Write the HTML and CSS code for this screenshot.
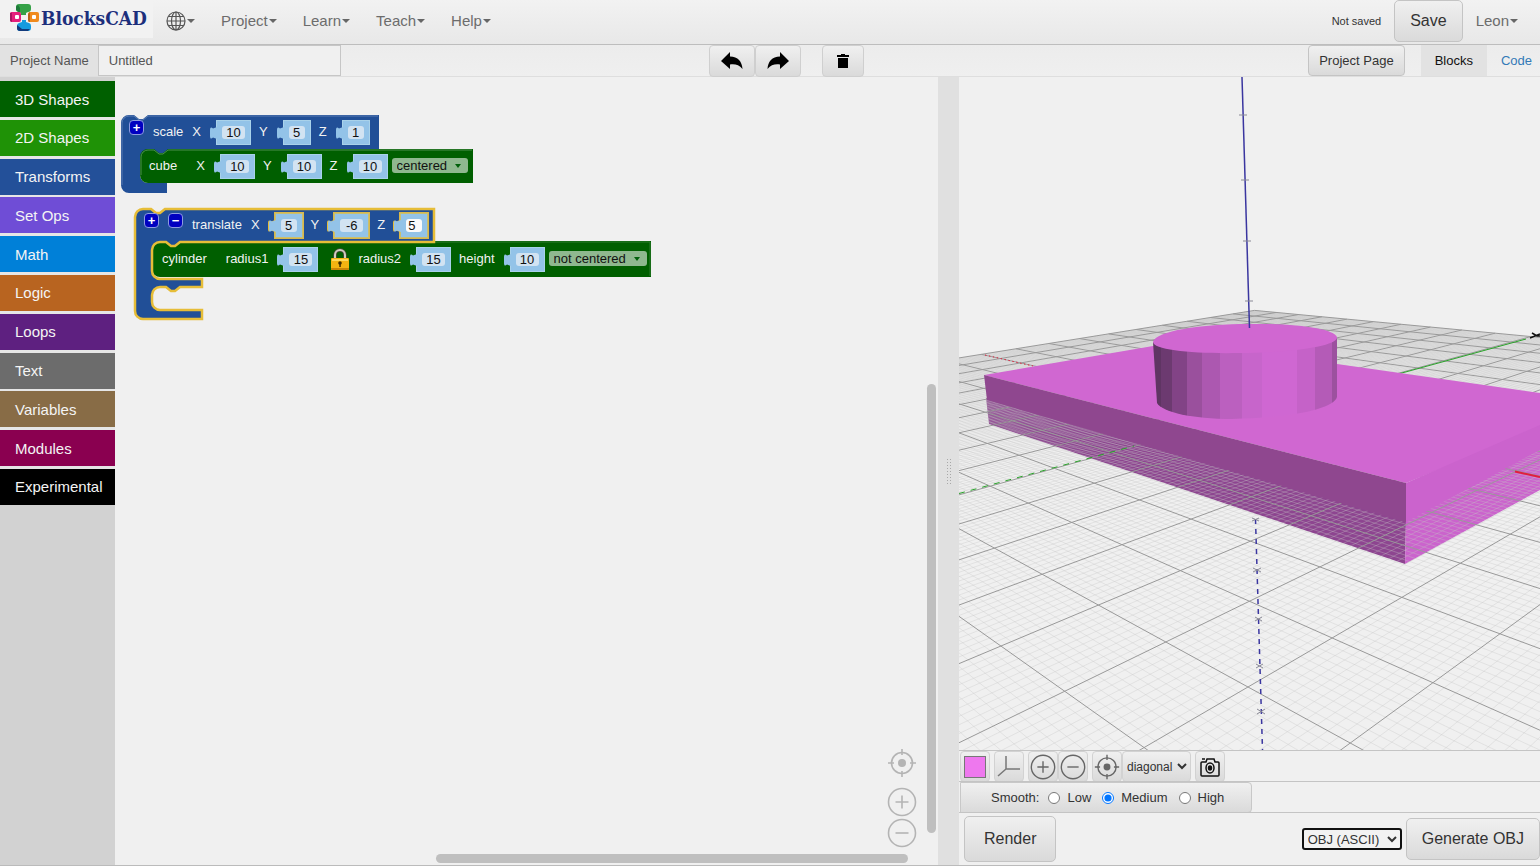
FILE: index.html
```html
<!DOCTYPE html>
<html lang="en">
<head>
  <meta charset="UTF-8" />
  <title>BlocksCAD</title>
  <link rel="stylesheet" href="styles.css">
</head>
<body>

<!-- shared icons -->
<svg class="sprite" aria-hidden="true">
  <symbol id="icon-target" viewBox="0 0 30 30">
    <g fill="none" stroke="currentColor" stroke-width="1.6">
      <circle cx="15" cy="15" r="10.5"/>
      <path d="M15 1v6M15 23v6M1 15h6M23 15h6"/>
    </g>
    <circle cx="15" cy="15" r="4" fill="currentColor"/>
  </symbol>
  <symbol id="icon-plus" viewBox="0 0 30 30">
    <g fill="none" stroke="currentColor" stroke-width="1.6">
      <circle cx="15" cy="15" r="13.5"/>
      <path d="M15 8.500v13M8.500 15h13"/>
    </g>
  </symbol>
  <symbol id="icon-minus" viewBox="0 0 30 30">
    <g fill="none" stroke="currentColor" stroke-width="1.6">
      <circle cx="15" cy="15" r="13.500"/>
      <path d="M8.500 15h13"/>
    </g>
  </symbol>
  <symbol id="icon-tab" viewBox="0 0 8 14">
    <path d="M8 1L4 2.500C2 .5 1 1.500 1 4v6c0 2.500 1 3.500 3 1.500l4 1.500z" fill="#93c3e8"/>
  </symbol>
</svg>

<header class="navbar">
  <a class="logo" href="#">
    <svg width="30" height="28" viewBox="0 0 30 28">
      <path d="M9 0h9a3 3 0 0 1 3 3v2a3 3 0 0 1-3 3l-2 1v2h-5V9L8 8a3 3 0 0 1-2-3V3a3 3 0 0 1 3-3z" fill="#35a147"/>
      <path d="M8 1a3 3 0 0 0-2 2v3l4 3V4z" fill="#1e7a3a"/>
      <path d="M1 8h8a2 2 0 0 1 2 2v6a2 2 0 0 1-2 2H2a2 2 0 0 1-2-2V9z" fill="#e5207c"/>
      <path d="M0 9h2v9a2 2 0 0 1-2-2z" fill="#a81560"/>
      <rect x="5" y="11" width="4" height="4" rx="1" fill="#fff"/>
      <path d="M20 8h7a2 2 0 0 1 2 2v6a2 2 0 0 1-2 2h-7a2 2 0 0 1-2-2v-6a2 2 0 0 1 2-2z" fill="#f08a1d"/>
      <path d="M18 10l2-2v10a2 2 0 0 1-2-2z" fill="#b8621a"/>
      <rect x="22" y="11" width="4" height="4" rx="1" fill="#fff"/>
      <path d="M12 16h4v2l3 1a3 3 0 0 1 2 3v2a3 3 0 0 1-3 3H9a3 3 0 0 1-2-3v-2a3 3 0 0 1 2-3l3-1z" fill="#159be0"/>
      <path d="M7 21v3a3 3 0 0 0 3 3h8l2-2h-8z" fill="#123a7c"/>
    </svg>
    <span>BlocksCAD</span>
  </a>
  <nav class="menu">
    <button type="button" class="menu-item" aria-label="Language">
      <svg class="globe" width="20" height="20" viewBox="0 0 20 20" fill="none" stroke="#555" stroke-width="1.200">
        <circle cx="10" cy="10" r="9"/>
        <ellipse cx="10" cy="10" rx="4.500" ry="9"/>
        <path d="M10 1v18M1 10h18M2.500 5.500h15M2.500 14.500h15"/>
      </svg><i class="caret"></i>
    </button>
    <button type="button" class="menu-item">Project<i class="caret"></i></button>
    <button type="button" class="menu-item">Learn<i class="caret"></i></button>
    <button type="button" class="menu-item">Teach<i class="caret"></i></button>
    <button type="button" class="menu-item">Help<i class="caret"></i></button>
  </nav>
  <div class="account">
    <span class="save-state">Not saved</span>
    <button type="button" class="btn btn-lg">Save</button>
    <button type="button" class="menu-item">Leon<i class="caret"></i></button>
  </div>
</header>

<div class="toolbar">
  <div class="toolbar-left">
    <label for="projectName">Project Name</label>
    <input type="text" id="projectName" value="Untitled">
  </div>
  <div class="history">
    <button type="button" class="btn" aria-label="Undo">
      <svg width="24" height="18" viewBox="0 0 24 18"><path d="M1 9L10 0v4.500c8 0 12 5 12.500 12.500C19 12.500 15 12 10 12.500V17z"/></svg>
    </button>
    <button type="button" class="btn" aria-label="Redo">
      <svg width="24" height="18" viewBox="0 0 24 18"><path d="M23 9L14 0v4.500C6 4.500 2 9.500 1.500 17 5 12.500 9 12 14 12.500V17z"/></svg>
    </button>
    <button type="button" class="btn trash" aria-label="Delete">
      <svg width="12" height="14" viewBox="0 0 12 14"><path d="M4 0h4v1h4v2H0V1h4zM1 4h10v10H1z"/></svg>
    </button>
  </div>
  <div class="toolbar-right">
    <button type="button" class="btn">Project Page</button>
    <div class="tabs">
      <a class="tab active" href="#blocks">Blocks</a>
      <a class="tab" href="#code">Code</a>
    </div>
  </div>
</div>

<main class="editor">
  <nav class="toolbox">
    <div class="categories">
      <button type="button" class="category shapes3d">3D Shapes</button>
      <button type="button" class="category shapes2d">2D Shapes</button>
      <button type="button" class="category transforms">Transforms</button>
      <button type="button" class="category setops">Set Ops</button>
      <button type="button" class="category math">Math</button>
      <button type="button" class="category logic">Logic</button>
      <button type="button" class="category loops">Loops</button>
      <button type="button" class="category text">Text</button>
      <button type="button" class="category variables">Variables</button>
      <button type="button" class="category modules">Modules</button>
      <button type="button" class="category experimental">Experimental</button>
    </div>
  </nav>

  <section class="workspace">
    <div class="block block-scale">
      <svg class="block-shape" width="356" height="80">
        <path d="M0 8a8 8 0 0 1 8-8h5l5 4h4l5-4H258V42H19V60a8 8 0 0 0 8 8H46V78H8a8 8 0 0 1-8-8z" fill="#214f97"/>
        <path d="M1 70V8a7 7 0 0 1 7-7h5l5 4h4l5-4H257" fill="none" stroke="#5a7db3"/>
        <path d="M19 42a8 8 0 0 1 8-8h6l5 4h4l5-4H352V68H27a8 8 0 0 1-8-8z" fill="#005f00"/>
        <path d="M20 60V42a7 7 0 0 1 7-7h6l5 4h4l5-4H351" fill="none" stroke="#4d8f4d"/>
      </svg>
      <div class="block-row">
        <button type="button" class="mutator" aria-label="Add">+</button>
        <span class="block-name">scale</span>
        <label for="scaleX">X</label>
        <span class="value"><svg class="notch"><use href="#icon-tab"/></svg><input id="scaleX" value="10"></span>
        <label for="scaleY">Y</label>
        <span class="value short"><svg class="notch"><use href="#icon-tab"/></svg><input id="scaleY" value="5"></span>
        <label for="scaleZ">Z</label>
        <span class="value short"><svg class="notch"><use href="#icon-tab"/></svg><input id="scaleZ" value="1"></span>
      </div>
      <div class="block-row child">
        <span class="block-name wide">cube</span>
        <label for="cubeX">X</label>
        <span class="value"><svg class="notch"><use href="#icon-tab"/></svg><input id="cubeX" value="10"></span>
        <label for="cubeY">Y</label>
        <span class="value"><svg class="notch"><use href="#icon-tab"/></svg><input id="cubeY" value="10"></span>
        <label for="cubeZ">Z</label>
        <span class="value"><svg class="notch"><use href="#icon-tab"/></svg><input id="cubeZ" value="10"></span>
        <span class="dropdown"><select aria-label="Cube centering"><option>centered</option></select></span>
      </div>
    </div>

    <div class="block block-translate selected">
      <svg class="block-shape" width="520" height="112">
        <path d="M18 41a8 8 0 0 1 8-8H517V69H26a8 8 0 0 1-8-8z" fill="#005f00"/>
        <path d="M68 34H516V68" fill="none" stroke="#2f7a2f"/>
        <path d="M1 8a8 8 0 0 1 8-8h8l5 4h4l5-4H300V33H46l-5 4h-4l-5-4H26a8 8 0 0 0-8 8V62a8 8 0 0 0 8 8H68V78H46l-5 4h-4l-5-4H26a8 8 0 0 0-8 8v7a8 8 0 0 0 8 8H68v9H9a8 8 0 0 1-8-8z" transform="translate(0 1)" fill="#214f97" stroke="#e6bd38" stroke-width="2.500"/>
      </svg>
      <div class="block-row">
        <button type="button" class="mutator" aria-label="Add">+</button>
        <button type="button" class="mutator" aria-label="Remove">−</button>
        <span class="block-name">translate</span>
        <label for="moveX">X</label>
        <span class="value short"><svg class="notch"><use href="#icon-tab"/></svg><input id="moveX" value="5"></span>
        <label for="moveY">Y</label>
        <span class="value"><svg class="notch"><use href="#icon-tab"/></svg><input id="moveY" value="-6"></span>
        <label for="moveZ">Z</label>
        <span class="value short editing"><svg class="notch"><use href="#icon-tab"/></svg><input id="moveZ" value="5"></span>
      </div>
      <div class="block-row child">
        <span class="block-name wide">cylinder</span>
        <label for="radius1">radius1</label>
        <span class="value"><svg class="notch"><use href="#icon-tab"/></svg><input id="radius1" value="15"></span>
        <button type="button" class="lock" aria-label="Lock radii">
          <svg width="18" height="22" viewBox="0 0 18 22">
            <path d="M4 11V7a5 5 0 0 1 10 0v4" fill="none" stroke="#4c4a3e" stroke-width="3.500"/>
            <path d="M4 11V7a5 5 0 0 1 10 0v4" fill="none" stroke="#cfcdc0" stroke-width="2"/>
            <rect x="0" y="10" width="18" height="12" rx="1" fill="#f3b411"/>
            <path d="M1 11h16v2H1z" fill="#ffd95a"/>
            <path d="M0 20h18v1a1 1 0 0 1-1 1H1a1 1 0 0 1-1-1z" fill="#c98606"/>
            <circle cx="9" cy="15" r="1.800" fill="#3a2a00"/>
            <path d="M8.300 15h1.500v4H8.300z" fill="#3a2a00"/>
          </svg>
        </button>
        <label for="radius2">radius2</label>
        <span class="value"><svg class="notch"><use href="#icon-tab"/></svg><input id="radius2" value="15"></span>
        <label for="height">height</label>
        <span class="value"><svg class="notch"><use href="#icon-tab"/></svg><input id="height" value="10"></span>
        <span class="dropdown"><select aria-label="Cylinder centering"><option>not centered</option></select></span>
      </div>
    </div>

    <div class="workspace-zoom">
      <button type="button" aria-label="Center"><svg width="30" height="30"><use href="#icon-target"/></svg></button>
      <button type="button" aria-label="Zoom in"><svg width="30" height="30"><use href="#icon-plus"/></svg></button>
      <button type="button" aria-label="Zoom out"><svg width="30" height="30"><use href="#icon-minus"/></svg></button>
    </div>
    <div class="scrollbar vertical"></div>
    <div class="scrollbar horizontal"></div>
  </section>

  <div class="splitter"><span class="grip"></span></div>

  <section class="viewer">
    <svg class="scene" viewBox="959 77 581 673" preserveAspectRatio="xMidYMid slice">
      <defs>
        <linearGradient id="facets" gradientUnits="userSpaceOnUse" x1="1154" y1="0" x2="1337" y2="0">
          <stop offset="0" stop-color="#5f3563"/><stop offset=".04" stop-color="#5f3563"/>
          <stop offset=".04" stop-color="#6c3a70"/><stop offset=".1" stop-color="#6c3a70"/>
          <stop offset=".1" stop-color="#824386"/><stop offset=".18" stop-color="#824386"/>
          <stop offset=".18" stop-color="#9a509d"/><stop offset=".26" stop-color="#9a509d"/>
          <stop offset=".26" stop-color="#ac58b0"/><stop offset=".36" stop-color="#ac58b0"/>
          <stop offset=".36" stop-color="#bb60bf"/><stop offset=".48" stop-color="#bb60bf"/>
          <stop offset=".48" stop-color="#c765cb"/><stop offset=".59" stop-color="#c765cb"/>
          <stop offset=".59" stop-color="#cf67d2"/><stop offset=".78" stop-color="#cf67d2"/>
          <stop offset=".78" stop-color="#c562c8"/><stop offset=".88" stop-color="#c562c8"/>
          <stop offset=".88" stop-color="#b45bb7"/><stop offset=".97" stop-color="#b45bb7"/>
          <stop offset=".97" stop-color="#9c519f"/><stop offset="1" stop-color="#9c519f"/>
        </linearGradient>
      </defs>

      <!-- part of the slab under the ground plane -->
      <path d="M986 398L989 424L1405 564L1406 520z" fill="#8d4590"/>
      <path d="M1406 520L1405 564L1540 490V440z" fill="#cb63cd"/>

      <path id="minorGrid" class="grid-minor"/>
      <path id="majorGrid" class="grid-major"/>

      <path d="M959 493.500L1134 446" class="axis-y" stroke-dasharray="6 6"/>
      <path d="M985 355L1033 366" class="axis-x" stroke-dasharray="1.500 2.500"/>
      <path d="M1400 373.500L1526 339" class="axis-y"/>

      <!-- part of the slab above the ground plane -->
      <path d="M984 375L1153 346L1337 364L1540 393V428L1406 483z" fill="#d067d1"/>
      <path d="M984 375L1406 483V522L987 400z" fill="#8f478f"/>
      <path d="M1406 483L1540 425V450L1406 522z" fill="#cb63cd"/>
      <path d="M1515 471.500L1540 477" class="axis-x" stroke-width="2"/>

      <!-- cylinder -->
      <path d="M1153 342L1157 403C1162 412 1192 419 1232 419C1290 418 1334 409 1337 397V338z" fill="url(#facets)"/>
      <path d="M1153 342C1156 331 1200 324 1250 324C1298 323 1334 329 1337 337C1339 346 1290 353 1240 353C1195 354 1153 350 1153 342z" fill="#d067d1"/>

      <path d="M1242 77L1249.500 328" class="axis-z"/>
      <path d="M1255.500 519L1262.500 750" class="axis-z" stroke-dasharray="5 5"/>
      <path d="M1239 115h8M1241 180h8M1243 241h8M1245 301h8" class="tick"/>
      <path d="M1252 518l7 3m0-3l-7 3M1253 568l8 4m0-4l-8 4M1255 617l7 4m0-4l-7 4M1256 664l7 4m0-4l-7 4M1257 709l8 5m0-5l-8 5" class="tick"/>
      <path d="M1530 338l10-4M1532 333l5 3h4" fill="none" stroke="#111" stroke-width="1.500"/>
    </svg>

    <div class="view-tools">
      <button type="button" class="btn tool" aria-label="Color"><span class="swatch"></span></button>
      <button type="button" class="btn tool" aria-label="Axes">
        <svg width="24" height="24" viewBox="0 0 24 24" fill="none" stroke="#777" stroke-width="1.500"><path d="M9 1v13h14M9 14l-8 7"/></svg>
      </button>
      <div class="tool-group">
        <button type="button" class="btn tool" aria-label="Zoom in"><svg width="26" height="26"><use href="#icon-plus"/></svg></button>
        <button type="button" class="btn tool" aria-label="Zoom out"><svg width="26" height="26"><use href="#icon-minus"/></svg></button>
      </div>
      <div class="tool-group">
        <button type="button" class="btn tool" aria-label="Reset view"><svg width="26" height="26"><use href="#icon-target"/></svg></button>
        <select class="btn view-select" aria-label="View"><option>diagonal</option></select>
      </div>
      <button type="button" class="btn tool" aria-label="Take picture">
        <svg width="22" height="22" viewBox="0 0 22 22" fill="none" stroke="#111" stroke-width="1.500">
          <path d="M3 6h4l1-3h7l1 3h3a1 1 0 0 1 1 1v12a1 1 0 0 1-1 1H3a1 1 0 0 1-1-1V7a1 1 0 0 1 1-1zM3 3h3"/>
          <ellipse cx="11" cy="12" rx="4" ry="5"/>
          <ellipse cx="11" cy="12" rx="1.500" ry="2" fill="#111"/>
        </svg>
      </button>
    </div>

    <div class="smooth-row">
      <fieldset class="smooth">
        <legend>Smooth:</legend>
        <label><input type="radio" name="smooth">Low</label>
        <label><input type="radio" name="smooth" checked>Medium</label>
        <label><input type="radio" name="smooth">High</label>
      </fieldset>
    </div>

    <div class="render-row">
      <button type="button" class="btn btn-lg render">Render</button>
      <div class="export">
        <select class="format" aria-label="Export format"><option>OBJ (ASCII)</option></select>
        <button type="button" class="btn btn-lg">Generate OBJ</button>
      </div>
    </div>
  </section>
</main>

<script>
  // perspective of the ground plane, one unit = one major grid cell
  function project(i, j) {
    const w = 1 - 0.1095 * i + 0.1045 * j;
    const x = (1247.9 - 45.5 * i + 223.4 * j) / w;
    const y = (687 - 25.3 * i + 17.6 * j) / w;
    return x.toFixed(1) + ' ' + y.toFixed(1);
  }

  const minI = -16, maxI = 4, minJ = -4, maxJ = 16;
  let major = '';
  let minor = '';

  for (let n = 0; n <= 200; n++) {
    const i = minI + n / 10;
    const j = minJ + n / 10;
    const lines = `M${project(i, minJ)}L${project(i, maxJ)}M${project(minI, j)}L${project(maxI, j)}`;
    if (n % 10 === 0) {
      major += lines;
    } else {
      minor += lines;
    }
  }

  document.getElementById('majorGrid').setAttribute('d', major);
  document.getElementById('minorGrid').setAttribute('d', minor);
</script>
</body>
</html>
```

FILE: styles.css
```css
* {
    box-sizing: border-box;
}

body {
    margin: 0;
    height: 100vh;
    display: flex;
    flex-direction: column;
    overflow: hidden;
    background-color: #f0f0f0;
    color: #333;
    font-family: "Liberation Sans", Arial, Helvetica, sans-serif;
    font-size: 13px;
}

button, input, select {
    font-family: inherit;
    font-size: inherit;
    color: inherit;
    margin: 0;
}

a {
    text-decoration: none;
}

.sprite {
    position: absolute;
    width: 0;
    height: 0;
}

.btn {
    display: flex;
    align-items: center;
    justify-content: center;
    padding: 0 10px;
    border: 1px solid #c4c4c4;
    border-radius: 4px;
    background: linear-gradient(#f0f0f0, #dadada);
}

.btn-lg {
    font-size: 16px;
    padding: 0 15px;
    border-radius: 5px;
}

.caret {
    margin-left: 1px;
    border-top: 4px solid #666;
    border-left: 4px solid transparent;
    border-right: 4px solid transparent;
}

/* top bar */
.navbar {
    display: flex;
    height: 45px;
    flex-shrink: 0;
    border-bottom: 1px solid #bdbdbd;
    background: linear-gradient(#f2f2f2, #e8e8e8);
}

.logo {
    display: flex;
    width: 153px;
    height: 38px;
    padding: 4px 0 0 10px;
    background-color: #f2f2f2;
    color: #1d2f7c;
    font: bold 19px/28px "DejaVu Serif Condensed", "DejaVu Serif", serif;
}

.logo svg {
    flex-shrink: 0;
    margin-right: 1px;
}

.menu {
    display: flex;
}

.menu-item {
    display: flex;
    align-items: center;
    align-self: flex-start;
    height: 41px;
    padding: 0 13px;
    border: 0;
    background: none;
    color: #6c6c6c;
    font-size: 15px;
}

.account {
    display: flex;
    align-items: center;
    height: 42px;
    margin-left: auto;
    padding-right: 9px;
}

.account .btn {
    height: 42px;
}

.save-state {
    margin-right: 13px;
    font-size: 11px;
}

/* project bar */
.toolbar {
    display: flex;
    height: 32px;
    flex-shrink: 0;
    border-bottom: 1px solid #dedede;
    background: linear-gradient(#ececec, #efefef);
}

.toolbar-left {
    display: flex;
    flex: 709 1 0;
}

.toolbar-left label {
    padding: 0 9px 0 10px;
    background-color: #e2e2e2;
    color: #555;
    line-height: 31px;
}

.toolbar-left input {
    width: 243px;
    padding: 0 10px;
    border: 1px solid #c6c6c6;
    background-color: #f0f0f0;
    color: #555;
}

.toolbar-right {
    display: flex;
    flex: 676 1 0;
    justify-content: flex-end;
}

.history {
    display: flex;
    height: 32px;
}

.history .btn {
    width: 46px;
    border-color: #cfcfcf;
}

.history .trash {
    width: 42px;
    margin-left: 21px;
}

.tabs {
    display: flex;
    margin-left: 16px;
    line-height: 31px;
}

.tab {
    padding: 0 14px;
    color: #337ab7;
}

.tab.active {
    background-color: #e2e2e2;
    color: #111;
}

.tab:last-child {
    padding-right: 8px;
}

/* editor */
.editor {
    flex: 1;
    min-height: 0;
    display: grid;
    grid-template-columns: 115px minmax(0, 823fr) 21px minmax(0, 581fr);
    grid-template-rows: minmax(0, 1fr);
    border-bottom: 1px solid #bbb;
}

.toolbox {
    padding-top: 4px;
    background-color: #d2d2d2;
}

.categories {
    display: flex;
    flex-direction: column;
    justify-content: space-between;
    height: 424px;
    background-color: #e6e6e6;
}

.category {
    height: 36px;
    padding: 0 15px;
    border: 0;
    color: #f4f4f4;
    font-size: 15px;
    text-align: left;
}

.shapes3d { background-color: #006000; }
.shapes2d { background-color: #1f9206; }
.transforms { background-color: #235099; }
.setops { background-color: #6f4dd6; }
.math { background-color: #0080d8; }
.logic { background-color: #b86420; }
.loops { background-color: #5e2080; }
.text { background-color: #6c6c6c; }
.variables { background-color: #886c46; }
.modules { background-color: #8a0050; }
.experimental { background-color: #000; }

.workspace {
    position: relative;
    overflow: hidden;
}

/* blocks on the canvas */
.block {
    position: absolute;
}

.block-scale {
    left: 6px;
    top: 38px;
}

.block-translate {
    left: 19px;
    top: 131px;
}

.block-shape {
    position: absolute;
    left: 0;
    top: 0;
    overflow: visible;
}

.block-row {
    position: relative;
    display: flex;
    align-items: center;
    height: 34px;
    padding-left: 8px;
    color: #f2f2f2;
    white-space: nowrap;
}

.selected .block-row {
    padding-left: 10px;
}

.block-row.child {
    padding-left: 28px;
}

.block-row label {
    margin: 0 9px 0 8px;
    padding-bottom: 2px;
}

.block-name {
    margin-right: 1px;
    padding-bottom: 2px;
}

.block-name.wide {
    margin-right: 11px;
}

.mutator {
    width: 15px;
    height: 15px;
    margin: 5px 9px 0 0;
    align-self: flex-start;
    padding: 0;
    border: 1px solid #8d9be0;
    border-radius: 4px;
    background-color: #0000c0;
    color: #fff;
    font-size: 13px;
    font-weight: bold;
    line-height: 12px;
    text-align: center;
}

.value {
    position: relative;
    height: 25px;
    margin-left: 6px;
    padding: 5px;
    border: 1px solid #a9d2ea;
    background-color: #93c3e8;
}

.value .notch {
    position: absolute;
    left: -8px;
    top: 5px;
    width: 8px;
    height: 14px;
}

.value input {
    display: block;
    width: 23px;
    height: 13px;
    padding: 0;
    border: 0;
    border-radius: 3px;
    background-color: #d2e3f2;
    color: #111;
    line-height: 13px;
    text-align: center;
}

.value.short input {
    width: 16px;
}

.value.editing input {
    background-color: #fafafa;
    text-align: left;
    padding-left: 2px;
}

.selected .block-row:not(.child) .value {
    border-color: #c9bf70;
    box-shadow: 0 0 0 1px #d9b84a;
}

.selected .block-row:not(.child) .notch {
    filter: drop-shadow(-1px 0 0 #e6bd38);
}

.lock {
    width: 18px;
    height: 22px;
    margin: 0 1px 0 13px;
    padding: 0;
    border: 0;
    background: none;
}

.dropdown {
    position: relative;
    margin-left: 4px;
    padding-bottom: 2px;
    color: #111;
}

.dropdown select {
    display: block;
    height: 15px;
    padding: 0 20px 0 5px;
    border: 0;
    border-radius: 3px;
    appearance: none;
    background-color: #8fb88f;
    line-height: 15px;
}

.dropdown::after {
    content: "";
    position: absolute;
    right: 7px;
    top: 6px;
    border-top: 4px solid #00600a;
    border-left: 3px solid transparent;
    border-right: 3px solid transparent;
}

.workspace-zoom {
    position: absolute;
    right: 21px;
    bottom: 17px;
    display: flex;
    flex-direction: column;
    gap: 1px;
}

.workspace-zoom button {
    display: flex;
    padding: 0;
    border: 0;
    background: none;
    color: #b4b4b4;
}

.workspace-zoom button:first-child {
    margin-bottom: 8px;
}

.scrollbar {
    position: absolute;
    border-radius: 5px;
    background-color: #bfbfbf;
}

.scrollbar.vertical {
    right: 2px;
    top: 39%;
    bottom: 32px;
    width: 9px;
}

.scrollbar.horizontal {
    left: 39%;
    right: 30px;
    bottom: 2px;
    height: 9px;
}

.splitter {
    display: flex;
    align-items: center;
    justify-content: center;
    background-color: #e0e0e0;
}

.grip {
    width: 6px;
    height: 27px;
    background: radial-gradient(circle, #a8a8a8 1px, transparent 1px) 0 0 / 3px 3px;
}

/* 3D view */
.viewer {
    display: flex;
    flex-direction: column;
    min-height: 0;
}

.scene {
    display: block;
    flex: 1;
    width: 100%;
    min-height: 0;
}

.grid-minor {
    fill: none;
    stroke: #c6c6c6;
    stroke-width: .35;
}

.grid-major {
    fill: none;
    stroke: #999;
    stroke-width: 1;
}

.axis-x {
    stroke: #e0203c;
}

.axis-y {
    stroke: #28a428;
}

.axis-z {
    stroke: #3a36a0;
    stroke-width: 1.5;
}

.tick {
    stroke: #8a8a96;
}

.view-tools {
    display: flex;
    gap: 4px;
    height: 31px;
    padding-left: 1px;
    border-top: 1px solid #c4c4c4;
}

.tool-group {
    display: flex;
}

.tool {
    width: 30px;
    height: 31px;
    padding: 0;
    border-color: #d2d2d2;
    color: #666;
}

.swatch {
    width: 22px;
    height: 22px;
    border: 1px solid #777;
    background-color: #ee78ee;
}

.view-select {
    width: 69px;
    height: 31px;
    padding: 0;
    border-color: #d2d2d2;
    font-size: 12px;
}

.smooth-row {
    height: 31px;
    border-top: 1px solid #c4c4c4;
}

.smooth {
    display: flex;
    align-items: center;
    width: 292px;
    height: 31px;
    margin: 0 0 0 1px;
    padding: 0 0 0 30px;
    border: 1px solid #c8c8c8;
    border-radius: 0 4px 4px 0;
    background: linear-gradient(#f0f0f0, #dadada);
}

.smooth legend {
    float: left;
    padding: 0;
    margin-right: 9px;
}

.smooth label {
    display: flex;
    align-items: center;
    margin-right: 11px;
}

.smooth input {
    width: 12px;
    height: 12px;
    margin: 0 7px 0 0;
}

.render-row {
    display: flex;
    justify-content: space-between;
    height: 53px;
    padding: 3px 0 3px 5px;
    border-top: 1px solid #c4c4c4;
}

.render {
    padding: 0 19px;
}

.export {
    display: flex;
    align-items: center;
    gap: 4px;
}

.export .btn {
    height: 42px;
}

.format {
    width: 100px;
    height: 22px;
    border: 2px solid #111;
    border-radius: 3px;
    background-color: #f2f2f2;
}
```
